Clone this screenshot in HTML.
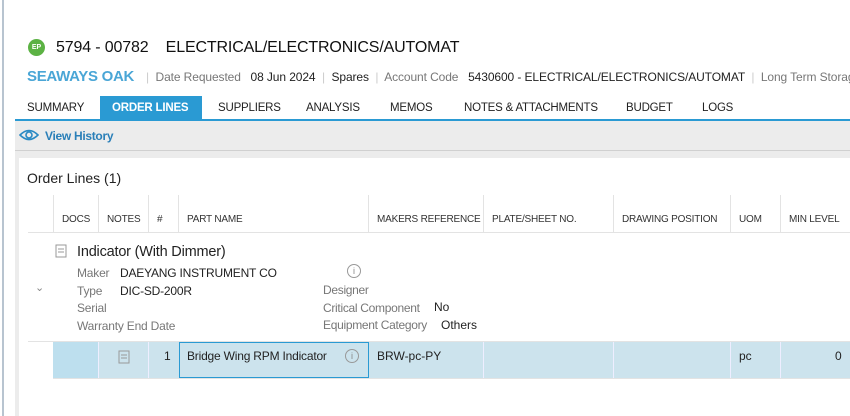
<!DOCTYPE html>
<html><head><meta charset="utf-8"><style>
*{margin:0;padding:0;box-sizing:border-box}
body{width:850px;height:416px;overflow:hidden;background:#fff;font-family:"Liberation Sans",sans-serif;position:relative;color:#222}
.a{position:absolute;white-space:nowrap}
.g{color:#777}
.hd{font-size:10px;color:#333;top:214px;letter-spacing:-0.2px}
.vl{position:absolute;width:1px;background:#e3e3e3}
.t{top:102px;font-size:11.5px;letter-spacing:-0.2px}
</style></head><body>
<div class="a" style="left:2px;top:0;width:2px;height:416px;background:#b8c4d0"></div>
<div class="a" style="left:28px;top:39px;width:17px;height:17px;border-radius:50%;background:#5cb244;color:#fff;font-size:7px;font-weight:bold;text-align:center;line-height:17px">EP</div>
<div class="a" style="left:56px;top:39px;font-size:16px;color:#111;letter-spacing:-0.15px">5794 - 00782&nbsp;&nbsp;&nbsp; ELECTRICAL/ELECTRONICS/AUTOMAT</div>
<div class="a" style="left:27px;top:68px;font-size:15px;font-weight:bold;color:#4aa6d6;letter-spacing:-0.3px">SEAWAYS OAK</div>
<div class="a" style="left:146px;top:70px;font-size:12px;letter-spacing:-0.1px"><span style="color:#ccc">|</span>&nbsp; <span class="g">Date Requested</span>&nbsp;&nbsp; 08 Jun 2024 &nbsp;<span style="color:#ccc">|</span>&nbsp; Spares &nbsp;<span style="color:#ccc">|</span>&nbsp; <span class="g">Account Code</span>&nbsp;&nbsp; 5430600 - ELECTRICAL/ELECTRONICS/AUTOMAT &nbsp;<span style="color:#ccc">|</span>&nbsp; <span class="g">Long Term Storage</span></div>
<div class="a" style="left:100px;top:96px;width:102px;height:24px;background:#2a9ad3"></div>
<div class="a" style="left:15px;top:119px;width:835px;height:2px;background:#2a9ad3"></div>
<div class="a t" style="left:27px">SUMMARY</div>
<div class="a t" style="left:112px;color:#fff;font-weight:bold">ORDER LINES</div>
<div class="a t" style="left:218px">SUPPLIERS</div>
<div class="a t" style="left:306px">ANALYSIS</div>
<div class="a t" style="left:390px">MEMOS</div>
<div class="a t" style="left:464px">NOTES &amp; ATTACHMENTS</div>
<div class="a t" style="left:626px">BUDGET</div>
<div class="a t" style="left:702px">LOGS</div>
<div class="a" style="left:15px;top:121px;width:835px;height:295px;background:#ececec"></div>
<div class="a" style="left:15px;top:150px;width:835px;height:1px;background:#d0d0d0"></div>
<svg class="a" style="left:19px;top:128px" width="20" height="14" viewBox="0 0 20 14"><path d="M1 7Q10 -2 19 7Q10 16 1 7Z" fill="none" stroke="#2a8ac4" stroke-width="1.6"/><circle cx="10" cy="7" r="3" fill="none" stroke="#2a8ac4" stroke-width="1.6"/></svg>
<div class="a" style="left:45px;top:129px;font-size:12px;font-weight:bold;color:#2a7fb8;letter-spacing:-0.3px">View History</div>
<div class="a" style="left:19px;top:158px;width:831px;height:258px;background:#fff"></div>
<div class="a" style="left:27px;top:170px;font-size:14px;color:#222">Order Lines (1)</div>
<div class="vl" style="left:53px;top:195px;height:37px"></div>
<div class="vl" style="left:98px;top:195px;height:37px"></div>
<div class="vl" style="left:148px;top:195px;height:37px"></div>
<div class="vl" style="left:178px;top:195px;height:37px"></div>
<div class="vl" style="left:368px;top:195px;height:37px"></div>
<div class="vl" style="left:483px;top:195px;height:37px"></div>
<div class="vl" style="left:613px;top:195px;height:37px"></div>
<div class="vl" style="left:730px;top:195px;height:37px"></div>
<div class="vl" style="left:780px;top:195px;height:37px"></div>
<div class="a" style="left:28px;top:232px;width:822px;height:1px;background:#e3e3e3"></div>
<div class="a hd" style="left:62px">DOCS</div>
<div class="a hd" style="left:107px">NOTES</div>
<div class="a hd" style="left:157px">#</div>
<div class="a hd" style="left:187px">PART NAME</div>
<div class="a hd" style="left:377px">MAKERS REFERENCE</div>
<div class="a hd" style="left:492px">PLATE/SHEET NO.</div>
<div class="a hd" style="left:622px">DRAWING POSITION</div>
<div class="a hd" style="left:739px">UOM</div>
<div class="a hd" style="left:789px">MIN LEVEL</div>
<svg class="a" style="left:55px;top:244px" width="12" height="14"><rect x="1" y="1" width="10" height="12" fill="none" stroke="#999"/><path d="M3 5h6M3 8h6" stroke="#999"/></svg>
<div class="a" style="left:77px;top:244px;font-size:14.5px;color:#222;letter-spacing:-0.2px">Indicator (With Dimmer)</div>
<div class="a" style="left:35px;top:281px;font-size:11px;color:#888">⌄</div>
<div class="a" style="left:77px;top:265px;font-size:12px;line-height:17.5px;letter-spacing:-0.2px"><span class="g">Maker</span><br><span class="g">Type</span><br><span class="g">Serial</span><br><span class="g">Warranty End Date</span></div>
<div class="a" style="left:120px;top:265px;font-size:12px;line-height:17.5px;letter-spacing:-0.2px">DAEYANG INSTRUMENT CO<br>DIC-SD-200R</div>
<div class="a" style="left:347px;top:264px;width:14px;height:14px;border:1px solid #999;border-radius:50%;font-size:9px;color:#888;text-align:center;line-height:12px">i</div>
<div class="a" style="left:323px;top:282px;font-size:12px;line-height:17.5px;letter-spacing:-0.3px"><span class="g">Designer</span><br><span class="g">Critical Component</span><br><span class="g">Equipment Category</span></div>
<div class="a" style="left:434px;top:300px;font-size:12px">No</div>
<div class="a" style="left:441px;top:318px;font-size:12px">Others</div>
<div class="a" style="left:28px;top:341px;width:822px;height:1px;background:#e3e3e3"></div>
<div class="a" style="left:53px;top:342px;width:797px;height:36px;background:#cce3ed"></div>
<div class="a" style="left:53px;top:342px;width:45px;height:36px;background:#bddfee"></div>
<div class="vl" style="left:98px;top:342px;height:36px;background:#eef"></div>
<div class="vl" style="left:148px;top:342px;height:36px;background:#eef"></div>
<div class="vl" style="left:483px;top:342px;height:36px;background:#eef"></div>
<div class="vl" style="left:613px;top:342px;height:36px;background:#eef"></div>
<div class="vl" style="left:730px;top:342px;height:36px;background:#eef"></div>
<div class="vl" style="left:780px;top:342px;height:36px;background:#eef"></div>
<div class="a" style="left:53px;top:378px;width:797px;height:1px;background:#e3e3e3"></div>
<div class="a" style="left:179px;top:342px;width:190px;height:36px;border:1px solid #2a9ad3"></div>
<svg class="a" style="left:118px;top:350px" width="12" height="14"><rect x="1" y="1" width="10" height="12" fill="none" stroke="#999"/><path d="M3 5h6M3 8h6" stroke="#999"/></svg>
<div class="a" style="left:164px;top:349px;font-size:12px">1</div>
<div class="a" style="left:187px;top:349px;font-size:12px;letter-spacing:-0.2px">Bridge Wing RPM Indicator</div>
<div class="a" style="left:345px;top:349px;width:14px;height:14px;border:1px solid #999;border-radius:50%;font-size:9px;color:#888;text-align:center;line-height:12px">i</div>
<div class="a" style="left:377px;top:349px;font-size:12px">BRW-pc-PY</div>
<div class="a" style="left:739px;top:349px;font-size:12px">pc</div>
<div class="a" style="left:835px;top:349px;font-size:12px">0</div>
</body></html>
